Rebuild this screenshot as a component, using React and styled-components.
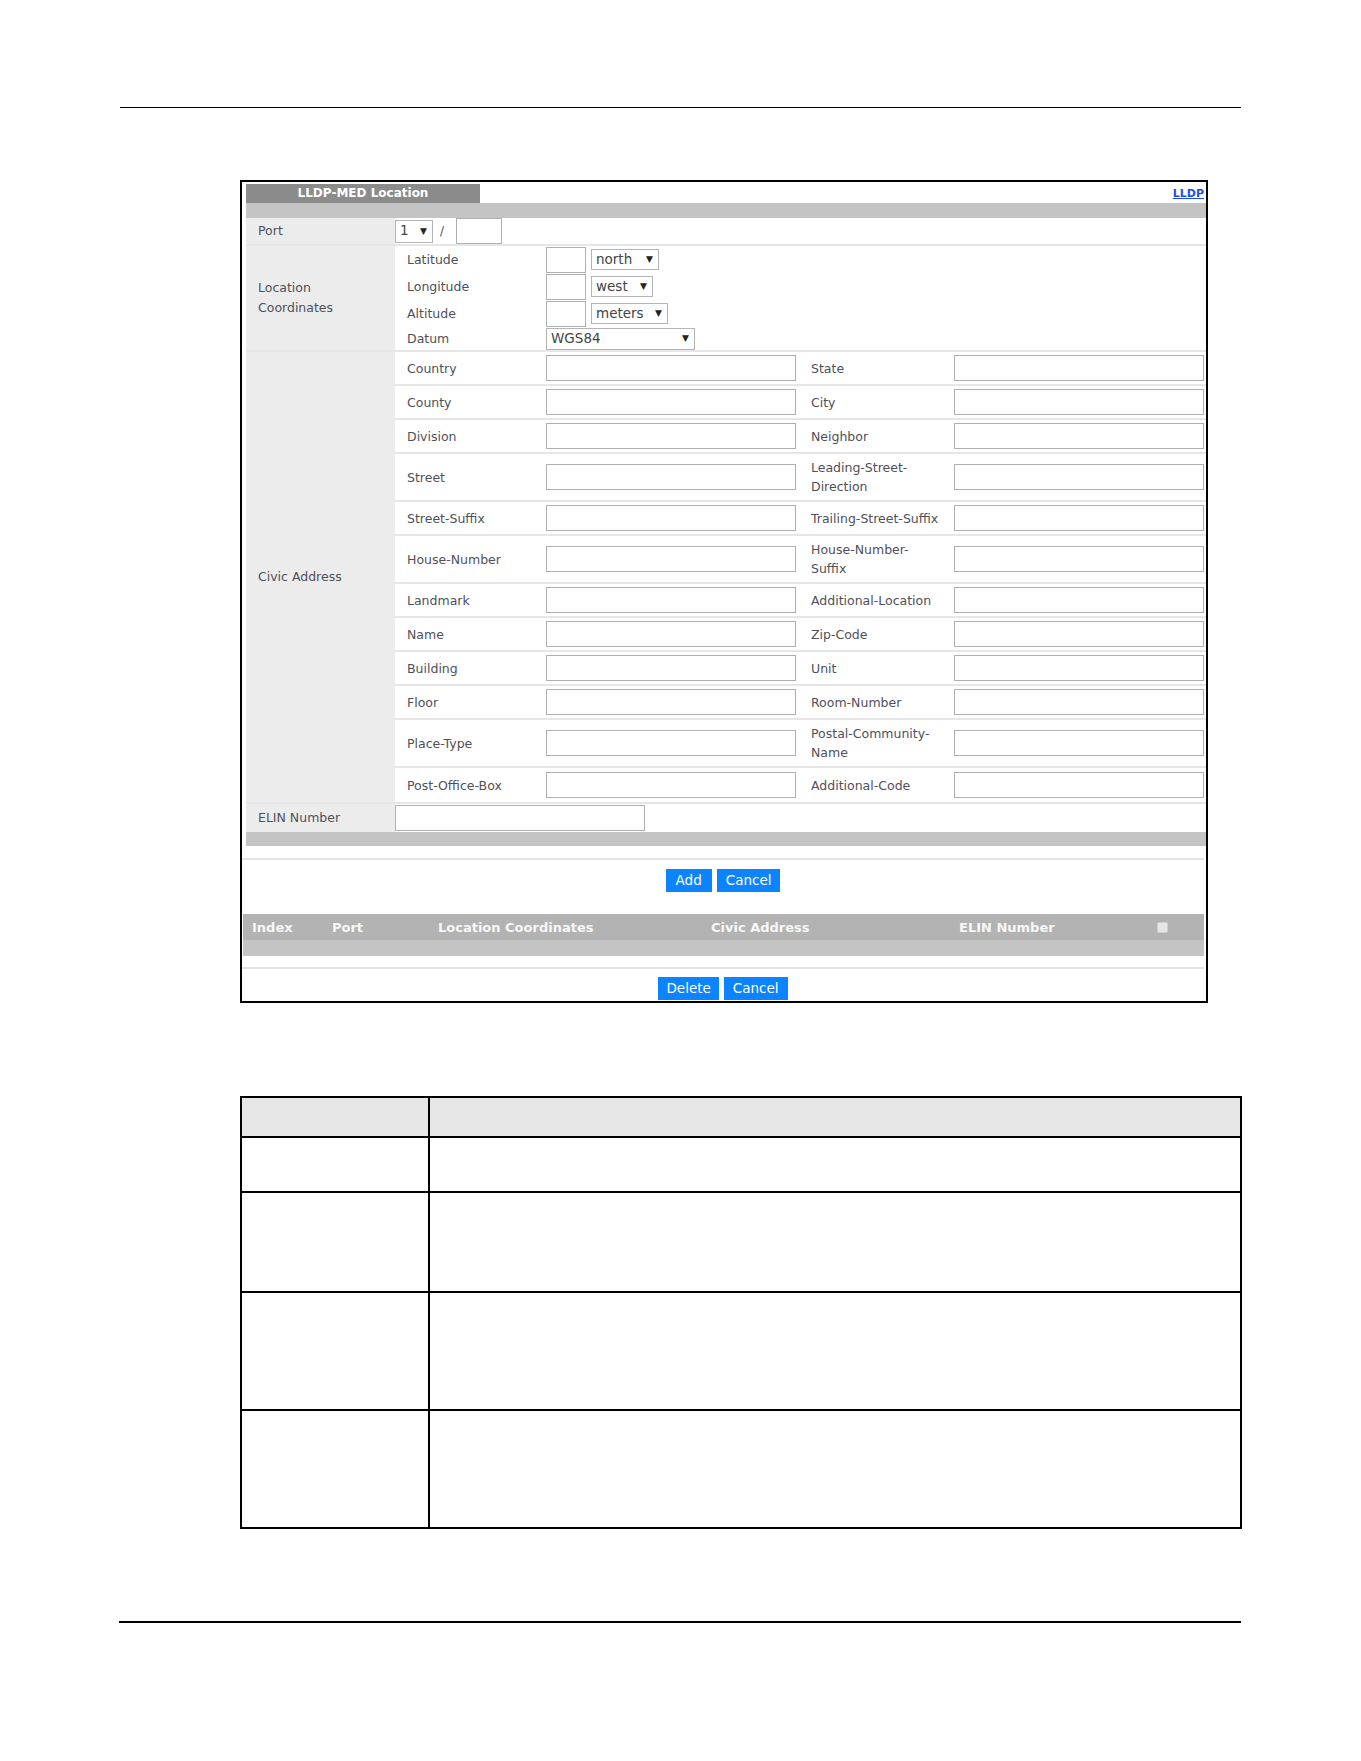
import React from "react";
import styled, { createGlobalStyle } from "styled-components";

const GlobalStyle = createGlobalStyle`
    body {
        margin: 0;
        background: #fff;
        font-family: "DejaVu Sans", "Liberation Sans", sans-serif;
        color: #505058;
    }
    * {
        box-sizing: border-box;
    }
`;

const Page = styled.div`
    width: 1361px;
    padding-top: 107px;
    padding-bottom: 140px;
`;

const Rule = styled.div`
    margin-left: ${props => props.$left}px;
    width: ${props => props.$width}px;
    height: ${props => props.$thick}px;
    background: #000;
`;

const Panel = styled.div`
    margin: 72px 0 0 240px;
    width: 968px;
    border: 2px solid #000;
    padding-bottom: 1px;
`;

const FormArea = styled.div`
    padding: 2px 0 0 4px;
    font-size: 12.5px;
`;

const TabRow = styled.div`
    display: flex;
    justify-content: space-between;
    align-items: flex-end;
    height: 19px;
`;

const Tab = styled.div`
    width: 234px;
    height: 19px;
    background: #8b8b8b;
    color: #fff;
    font-weight: bold;
    font-size: 12px;
    line-height: 19px;
    text-align: center;
`;

const TopLink = styled.a`
    color: #1f4fe6;
    font-weight: bold;
    font-size: 11px;
    line-height: 14px;
    text-decoration: underline;
    margin: 0 2px 2px 0;
`;

const GrayBar = styled.div`
    height: ${props => props.$h}px;
    background: #c4c4c4;
`;

const Section = styled.div`
    display: grid;
    grid-template-columns: 149px 1fr;
    height: ${props => props.$h ? `${props.$h}px` : "auto"};
    border-bottom: ${props => props.$noBorder ? "none" : "2px solid #e6e6e6"};
`;

const MainLabel = styled.div`
    background: #ececec;
    padding-left: 12px;
    display: flex;
    align-items: center;
    line-height: 20px;
`;

const Inline = styled.div`
    display: flex;
    align-items: center;
    gap: ${props => props.$gap || 0}px;
`;

const SelectBox = styled.div`
    display: flex;
    align-items: center;
    justify-content: space-between;
    width: ${props => props.$w}px;
    height: ${props => props.$h || 21}px;
    border: 1px solid #b4b4b4;
    background: #fff;
    padding: 0 5px 0 4px;
    font-size: 13.5px;
    color: #444;
    line-height: 1;
`;

const Arrow = styled.span`
    font-size: 9px;
    color: #222;
`;

const TextInput = styled.input`
    width: ${props => props.$w}px;
    height: 26px;
    border: 1px solid #b0b0b0;
    background: #fff;
    padding: 0 4px;
    margin: 0;
    font: inherit;
    outline: none;
`;

const Slash = styled.span`
    margin: 0 12px 0 7px;
    font-size: 12px;
`;

const LocRows = styled.div`
    display: flex;
    flex-direction: column;
`;

const LocRow = styled.div`
    display: grid;
    grid-template-columns: 151px 45px auto;
    align-items: center;
    height: ${props => props.$h}px;
`;

const SubLabel = styled.div`
    padding-left: 12px;
    line-height: 19px;
`;

const CivicRows = styled.div`
    display: flex;
    flex-direction: column;
`;

const CivicRow = styled.div`
    display: grid;
    grid-template-columns: 151px 260px 148px 250px;
    align-items: center;
    height: ${props => props.$tall ? 48 : 34}px;
    border-bottom: ${props => props.$last ? "none" : "2px solid #e6e6e6"};
`;

const RightLabel = styled.div`
    padding-left: 5px;
    line-height: 19px;
    white-space: nowrap;
`;

const LowerArea = styled.div`
    padding: 12px 2px 0 0;
`;

const Divider = styled.div`
    height: 2px;
    background: #e4e4e4;
`;

const ButtonRow = styled.div`
    display: flex;
    justify-content: center;
    gap: 5px;
    margin-top: ${props => props.$top}px;
`;

const Button = styled.button`
    height: 23px;
    padding: 0 ${props => props.$pad}px;
    background: #0d84ff;
    border: none;
    color: #fff;
    font-family: "DejaVu Sans", sans-serif;
    font-size: 13.5px;
    line-height: 23px;
`;

const ListHeader = styled.div`
    display: grid;
    grid-template-columns: 80px 106px 273px 248px 198px 11px;
    align-items: center;
    height: 26px;
    margin: 22px 0 0 1px;
    padding-left: 9px;
    background: #b3b3b3;
    color: #f7f7f7;
    font-weight: bold;
    font-size: 13px;
`;

const CheckBox = styled.span`
    display: block;
    width: 11px;
    height: 11px;
    border-radius: 2px;
    background: #e6e6e6;
    border: 1px solid #d0d0d0;
`;

const DescTable = styled.table`
    margin: 93px 0 0 240px;
    width: 1002px;
    border-collapse: collapse;
    border: 2px solid #000;

    td, th {
        border: 2px solid #000;
        padding: 0;
    }
`;

const HeadRow = styled.tr`
    height: 40px;
    background: #e6e6e6;
`;

const BodyRow = styled.tr`
    height: ${props => props.$h}px;
`;

const civicRows = [
    { left: "Country", right: ["State"] },
    { left: "County", right: ["City"] },
    { left: "Division", right: ["Neighbor"] },
    { left: "Street", right: ["Leading-Street-", "Direction"] },
    { left: "Street-Suffix", right: ["Trailing-Street-Suffix"] },
    { left: "House-Number", right: ["House-Number-", "Suffix"] },
    { left: "Landmark", right: ["Additional-Location"] },
    { left: "Name", right: ["Zip-Code"] },
    { left: "Building", right: ["Unit"] },
    { left: "Floor", right: ["Room-Number"] },
    { left: "Place-Type", right: ["Postal-Community-", "Name"] },
    { left: "Post-Office-Box", right: ["Additional-Code"] },
];

const coords = [
    { label: "Latitude", unit: "north", w: 68, h: 27 },
    { label: "Longitude", unit: "west", w: 62, h: 27 },
    { label: "Altitude", unit: "meters", w: 77, h: 27 },
];

const App = () => (
    <Page>
        <GlobalStyle />
        <Rule $left={120} $width={1121} $thick={1} />

        <Panel>
            <FormArea>
                <TabRow>
                    <Tab>LLDP-MED Location</Tab>
                    <TopLink href="#">LLDP</TopLink>
                </TabRow>
                <GrayBar $h={15} />

                <Section $h={28}>
                    <MainLabel>Port</MainLabel>
                    <Inline>
                        <SelectBox $w={38} $h={23}>1 <Arrow>▼</Arrow></SelectBox>
                        <Slash>/</Slash>
                        <TextInput $w={46} />
                    </Inline>
                </Section>

                <Section>
                    <MainLabel>Location<br />Coordinates</MainLabel>
                    <LocRows>
                        {coords.map(c => (
                            <LocRow key={c.label} $h={c.h}>
                                <SubLabel>{c.label}</SubLabel>
                                <TextInput $w={40} />
                                <SelectBox $w={c.w}>{c.unit} <Arrow>▼</Arrow></SelectBox>
                            </LocRow>
                        ))}
                        <LocRow $h={23}>
                            <SubLabel>Datum</SubLabel>
                            <SelectBox $w={149} $h={22} style={{ gridColumn: "2 / 4" }}>WGS84 <Arrow>▼</Arrow></SelectBox>
                        </LocRow>
                    </LocRows>
                </Section>

                <Section>
                    <MainLabel>Civic Address</MainLabel>
                    <CivicRows>
                        {civicRows.map((r, i) => (
                            <CivicRow
                                key={r.left}
                                $tall={r.right.length > 1}
                                $last={i === civicRows.length - 1}
                            >
                                <SubLabel>{r.left}</SubLabel>
                                <TextInput $w={250} />
                                <RightLabel>
                                    {r.right.map((t, j) => (
                                        <React.Fragment key={t}>
                                            {j > 0 && <br />}
                                            {t}
                                        </React.Fragment>
                                    ))}
                                </RightLabel>
                                <TextInput $w={250} />
                            </CivicRow>
                        ))}
                    </CivicRows>
                </Section>

                <Section $h={28} $noBorder>
                    <MainLabel>ELIN Number</MainLabel>
                    <Inline>
                        <TextInput $w={250} />
                    </Inline>
                </Section>
                <GrayBar $h={14} />
            </FormArea>

            <LowerArea>
                <Divider />
                <ButtonRow $top={9}>
                    <Button $pad={10}>Add</Button>
                    <Button $pad={9}>Cancel</Button>
                </ButtonRow>

                <ListHeader>
                    <span>Index</span>
                    <span>Port</span>
                    <span>Location Coordinates</span>
                    <span>Civic Address</span>
                    <span>ELIN Number</span>
                    <CheckBox />
                </ListHeader>
                <GrayBar $h={16} style={{ marginLeft: 1 }} />

                <Divider style={{ marginTop: 11 }} />
                <ButtonRow $top={8}>
                    <Button $pad={8}>Delete</Button>
                    <Button $pad={9}>Cancel</Button>
                </ButtonRow>
            </LowerArea>
        </Panel>

        <DescTable>
            <colgroup>
                <col style={{ width: 188 }} />
                <col />
            </colgroup>
            <tbody>
                <HeadRow><th /><th /></HeadRow>
                <BodyRow $h={55}><td /><td /></BodyRow>
                <BodyRow $h={100}><td /><td /></BodyRow>
                <BodyRow $h={118}><td /><td /></BodyRow>
                <BodyRow $h={118}><td /><td /></BodyRow>
            </tbody>
        </DescTable>

        <Rule $left={119} $width={1122} $thick={2} style={{ marginTop: 92 }} />
    </Page>
);

export default App;
